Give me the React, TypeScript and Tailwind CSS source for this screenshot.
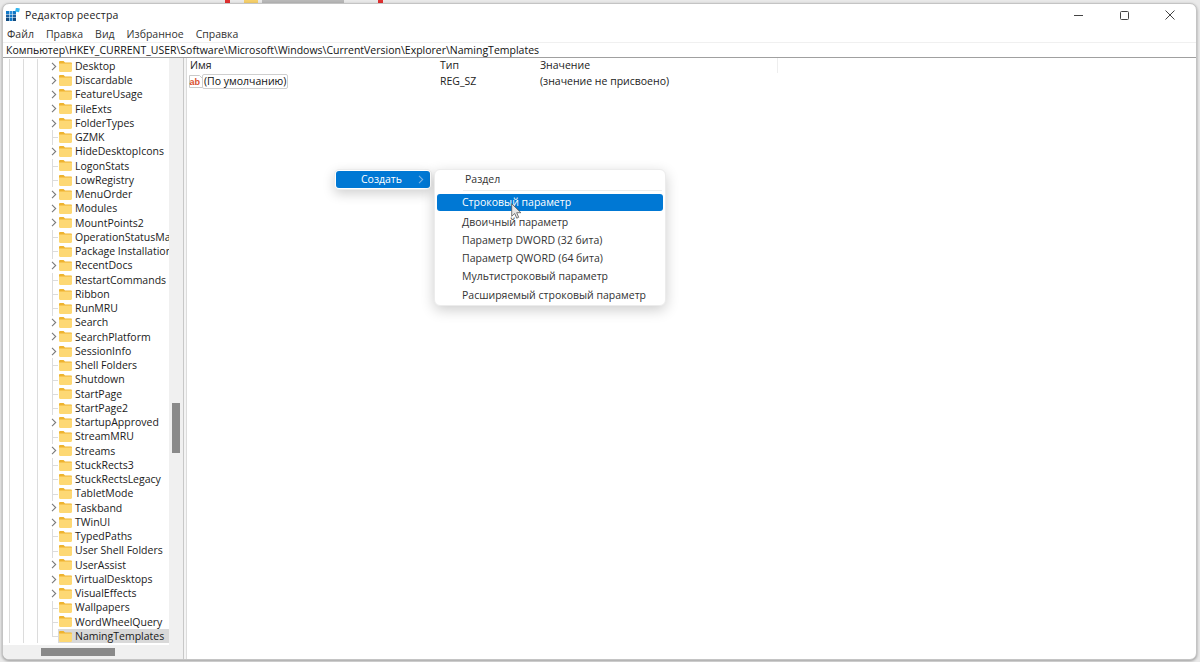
import React from "react";

const rows: [string, boolean][] = [
  ["Desktop", true], ["Discardable", true], ["FeatureUsage", true], ["FileExts", true], ["FolderTypes", true],
  ["GZMK", false], ["HideDesktopIcons", true], ["LogonStats", false], ["LowRegistry", false], ["MenuOrder", true],
  ["Modules", true], ["MountPoints2", true], ["OperationStatusMana", false], ["Package Installation", false],
  ["RecentDocs", true], ["RestartCommands", false], ["Ribbon", false], ["RunMRU", false], ["Search", true],
  ["SearchPlatform", true], ["SessionInfo", true], ["Shell Folders", false], ["Shutdown", false], ["StartPage", false],
  ["StartPage2", false], ["StartupApproved", true], ["StreamMRU", false], ["Streams", true], ["StuckRects3", false],
  ["StuckRectsLegacy", false], ["TabletMode", false], ["Taskband", true], ["TWinUI", true], ["TypedPaths", false],
  ["User Shell Folders", false], ["UserAssist", true], ["VirtualDesktops", true], ["VisualEffects", true],
  ["Wallpapers", false], ["WordWheelQuery", false], ["NamingTemplates", false],
];

const Folder = () => (
  <svg width="13" height="11" viewBox="0 0 13 11" className="shrink-0">
    <path d="M0 1.2C0 .5.5 0 1.2 0H4.6l1.4 1.6h5.8c.7 0 1.2.5 1.2 1.2V3H0z" fill="#eeb32f" />
    <path d="M0 2.6h13v7.2c0 .7-.5 1.2-1.2 1.2H1.2C.5 11 0 10.500 0 9.800z" fill="#fdd874" />
  </svg>
);

const Chevron = ({ color = "#7a7a7a" }: { color?: string }) => (
  <svg width="6" height="9" viewBox="0 0 6 9" className="shrink-0">
    <path d="M1 .8 4.700 4.500 1 8.200" fill="none" stroke={color} strokeWidth="1.100" />
  </svg>
);

const Guide = () => <div className="w-[14px] h-full shrink-0 border-l border-[#dcdcdc]" />;

function TreeRow({ name, exp, selected, last }: { name: string; exp: boolean; selected?: boolean; last?: boolean }) {
  return (
    <div className="flex items-center h-[14.25px] shrink-0">
      <div className="w-[6px] h-full shrink-0" />
      <Guide />
      <Guide />
      <div className="w-[13px] h-full shrink-0 border-l border-[#dcdcdc]" />
      <div className="relative w-[7px] h-full shrink-0 flex items-center justify-center">
        {exp ? (
          <Chevron />
        ) : (
          <>
            <div className={`absolute left-[2px] top-0 w-px border-l border-[#dcdcdc] ${last ? "h-[7px]" : "h-full"}`} />
            <div className="absolute left-[2px] top-[7px] w-[6px] border-t border-[#dcdcdc]" />
          </>
        )}
      </div>
      <div className={`flex items-center h-full pl-px ml-[1px] ${selected ? "bg-[#d9d9d9] pr-[14px]" : ""}`}>
        <Folder />
        <span className="ml-[3px] text-[10.5px] text-[#1a1a1a] whitespace-nowrap leading-none">{name}</span>
      </div>
    </div>
  );
}

function SubItem({ label }: { label: string }) {
  return (
    <div className="h-[18.300px] flex items-center pl-[28px] text-[#333] text-[10.5px] whitespace-nowrap">{label}</div>
  );
}

export default function App() {
  return (
    <div className="relative w-[1200px] h-[662px] overflow-hidden bg-[#e9e9e9] pt-[3px] pl-[2px] pr-[3px] pb-[2px] font-['Open_Sans','Noto_Sans',sans-serif]">
      <div className="absolute top-0 left-[225px] w-[5px] h-[3px] bg-[#e03030]" />
      <div className="absolute top-0 left-[244px] w-[14px] h-[3px] bg-[#f5cf6a]" />
      <div className="absolute top-0 left-[262px] w-[82px] h-[3px] bg-[#b8b8b8]" />
      <div className="absolute top-0 left-[378px] w-[5px] h-[3px] bg-[#e03030]" />

      <div className="relative flex flex-col w-full h-full bg-white rounded-[7px] overflow-hidden border border-[#c4c4c4] shadow-[0_1px_3px_rgba(0,0,0,0.35)]">
        {/* title bar */}
        <div className="flex items-center h-[22px] shrink-0 pl-[3px]">
          <svg width="14" height="14" viewBox="0 0 14 14" className="shrink-0">
            <rect x="0" y="3" width="3" height="3" fill="#0f78c8" />
            <rect x="3.500" y="3" width="3" height="3" fill="#2a8fdb" />
            <rect x="7" y="3" width="3" height="3" fill="#0f78c8" />
            <rect x="0" y="6.500" width="3" height="3" fill="#1b5f9e" />
            <rect x="3.500" y="6.500" width="3" height="3" fill="#0f78c8" />
            <rect x="7" y="6.500" width="3" height="3" fill="#1b5f9e" />
            <rect x="0" y="10" width="3" height="3" fill="#124a7e" />
            <rect x="3.500" y="10" width="3" height="3" fill="#0f78c8" />
            <rect x="7" y="10" width="3" height="3" fill="#124a7e" />
            <rect x="9.500" y="0" width="4" height="4" transform="rotate(12 11.500 2)" fill="#35b6ef" />
          </svg>
          <span className="ml-[5px] text-[10.5px] tracking-[0.2px] text-[#222] leading-none">Редактор реестра</span>
          <div className="ml-auto flex items-center h-full">
            <div className="w-[46px] flex justify-center">
              <div className="w-[9px] border-t border-[#444]" />
            </div>
            <div className="w-[46px] flex justify-center">
              <div className="w-[9px] h-[9px] border border-[#444] rounded-[1.500px]" />
            </div>
            <div className="w-[46px] flex justify-center mr-[3px]">
              <svg width="10" height="10" viewBox="0 0 10 10">
                <path d="M.5.5l9 9M9.500.5l-9 9" stroke="#444" strokeWidth="1" />
              </svg>
            </div>
          </div>
        </div>
        {/* menu */}
        <div className="flex items-center h-[17px] shrink-0 pl-[4px] gap-[12px] text-[10.5px] text-[#333] leading-none border-b border-[#f0f0f0]">
          <span>Файл</span>
          <span>Правка</span>
          <span>Вид</span>
          <span>Избранное</span>
          <span>Справка</span>
        </div>
        {/* address */}
        <div className="flex items-center h-[15px] shrink-0 pl-[3px] text-[10.5px] text-[#111] leading-none whitespace-nowrap border-b border-[#a0a0a0]">
          Компьютер\HKEY_CURRENT_USER\Software\Microsoft\Windows\CurrentVersion\Explorer\NamingTemplates
        </div>
        {/* body */}
        <div className="flex flex-1 min-h-0">
          <div className="relative w-[180px] shrink-0 flex">
            <div className="w-[166px] flex flex-col overflow-hidden pt-[1px]">
              {rows.map(([n, e], i) => (
                <TreeRow key={n} name={n} exp={e} selected={i === rows.length - 1} last={i === rows.length - 1} />
              ))}
            </div>
            <div className="w-[14px] bg-[#f0f0f0] relative">
              <div className="absolute left-[3px] top-[345px] w-[8px] h-[50px] bg-[#8a8a8a]" />
            </div>
            <div className="absolute left-0 bottom-0 w-[180px] h-[14px] bg-[#f0f0f0]">
              <div className="absolute left-[38px] top-[3px] w-[74px] h-[8px] bg-[#8a8a8a]" />
            </div>
          </div>
          <div className="w-[3px] shrink-0 bg-[#f4f4f4] border-l border-[#c8c8c8]" />
          <div className="flex-1 min-w-0 border-l border-[#dcdcdc] text-[10.500px] text-[#222]">
            <div className="flex items-center h-[15px] leading-none">
              <div className="w-[250px] pl-[3px]">Имя</div>
              <div className="w-[101px] pl-[3px]">Тип</div>
              <div className="w-[240px] pl-[2px] border-r border-[#eeeeee] h-full flex items-center">Значение</div>
            </div>
            <div className="flex items-center h-[17px] leading-none">
              <div className="w-[250px] pl-[2px] flex items-center">
                <svg width="14" height="13" viewBox="0 0 14 13" className="shrink-0">
                  <path d="M.5.500h10l3 3v9H.5z" fill="#fff" stroke="#c9c9c9" />
                  <text x="0.500" y="9.500" fontSize="9" fontWeight="700" fill="#d8502f" fontFamily="Liberation Sans">ab</text>
                </svg>
                <span className="border border-[#cfcfcf] rounded-[2px] h-[15px] px-px flex items-center text-[#111] bg-white whitespace-nowrap -ml-px">(По умолчанию)</span>
              </div>
              <div className="w-[101px] pl-[3px]">REG_SZ</div>
              <div className="pl-[2px]">(значение не присвоено)</div>
            </div>
          </div>
        </div>
      </div>

      {/* context menu */}
      <div className="absolute left-[334px] top-[169px] w-[98px] h-[21px] bg-white rounded-[5px] border border-[#ececec] shadow-[0_4px_12px_rgba(0,0,0,0.18)] p-[1px]">
        <div className="flex items-center h-full bg-[#0078d4] rounded-[3px] text-white text-[10.5px] leading-none">
          <span className="ml-[25px]">Создать</span>
          <span className="ml-auto mr-[6px] flex"><Chevron color="#7fb4e3" /></span>
        </div>
      </div>

      {/* submenu */}
      <div className="absolute left-[434px] top-[169px] w-[232px] h-[137px] bg-white rounded-[6px] border border-[#ececec] shadow-[0_4px_14px_rgba(0,0,0,0.2)] px-[2px] pt-[1px]">
        <SubItem label="Раздел" />
        <div className="ml-[26px] mr-[1px] mt-[1px] mb-[3px] border-t border-[#ededed]" />
        <div className="flex items-center h-[17px] pl-[25px] bg-[#0078d4] rounded-[3px] text-white text-[10.5px] whitespace-nowrap">Строковый параметр</div>
        <div className="flex flex-col pl-[-3px] -ml-[0px] mt-[2px]">
          <div className="-ml-[3px]"><SubItem label="Двоичный параметр" /></div>
          <div className="-ml-[3px]"><SubItem label="Параметр DWORD (32 бита)" /></div>
          <div className="-ml-[3px]"><SubItem label="Параметр QWORD (64 бита)" /></div>
          <div className="-ml-[3px]"><SubItem label="Мультистроковый параметр" /></div>
          <div className="-ml-[3px]"><SubItem label="Расширяемый строковый параметр" /></div>
        </div>
      </div>

      {/* cursor */}
      <svg width="12" height="17" viewBox="0 0 12 17" className="absolute left-[511px] top-[203px]">
        <path d="M.7.700v12.600l3-2.800 2 4.700 2-.9-2-4.600h4.200z" fill="#e6e6e6" stroke="#555" strokeWidth="0.800" />
      </svg>
    </div>
  );
}
